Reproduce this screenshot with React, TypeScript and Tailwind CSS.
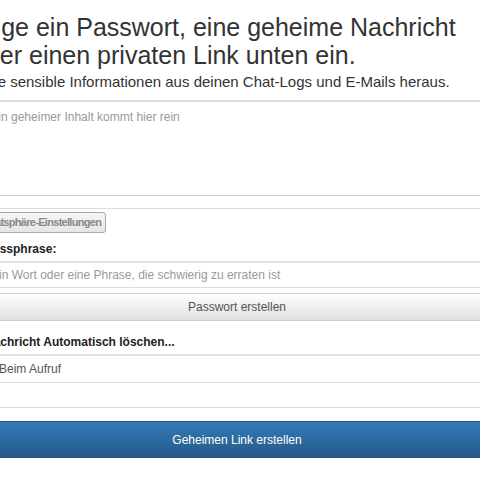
import { useState } from "react"

export default function App() {
  const [secret, setSecret] = useState("")
  const [passphrase, setPassphrase] = useState("")
  const [ttl, setTtl] = useState("Beim Aufruf")

  return (
    <div className="w-[480px] h-[480px] overflow-hidden bg-white font-['Liberation_Sans',Arial,sans-serif] text-[#333]">
      <div className="-ml-[30px] w-[534px]">
        <div className="pt-[13px]">
          <h1 className="text-[25px] leading-[28px] text-[#333] pl-[2px]">
            Füge ein Passwort, eine geheime Nachricht
            <br />
            oder einen privaten Link unten ein.
          </h1>
          <p className="mt-[4px] text-[15px] leading-[18px] text-[#333] pl-[1px]">
            Halte sensible Informationen aus deinen Chat-Logs und E-Mails heraus.
          </p>
        </div>

        {/* Secret */}
        <textarea
          value={secret}
          onChange={(e) => setSecret(e.target.value)}
          placeholder="Dein geheimer Inhalt kommt hier rein"
          className="mt-[9px] block w-full h-[96px] resize-none border border-[#ccc] border-t-2 border-t-[#ddd] px-[12px] pt-[6px] text-[12px] text-[#555] placeholder:text-[#999] outline-none"
        />

        <div className="mt-[12px] border-t border-[#ddd]">
          <button className="h-[21px] pl-[6px] pr-[4px] rounded-[3px] border border-[#aaa] bg-gradient-to-b from-[#f6f6f6] to-[#e6e6e6] text-[11px] tracking-[-0.7px] font-bold text-[#888] leading-none">
            Privatsphäre-Einstellungen
          </button>
        </div>

        {/* Passphrase */}
        <label className="block mt-[8px] pl-[15px] text-[12px] leading-[16px] font-bold text-[#222]">
          Passphrase:
        </label>
        <input
          value={passphrase}
          onChange={(e) => setPassphrase(e.target.value)}
          placeholder="Ein Wort oder eine Phrase, die schwierig zu erraten ist"
          className="mt-[4px] block w-full h-[27px] border border-[#ddd] border-t-2 border-t-[#e2e2e2] pl-[20px] text-[12px] text-[#555] placeholder:text-[#999] outline-none"
        />
        <button className="mt-[5px] block w-full h-[28px] border border-[#ccc] bg-gradient-to-b from-[#ffffff] to-[#e0e0e0] text-[12px] text-[#555]">
          Passwort erstellen
        </button>

        {/* Lifetime */}
        <label className="block mt-[13px] pl-[15px] text-[12px] leading-[16px] font-bold text-[#222]">
          Nachricht Automatisch löschen...
        </label>
        <select
          value={ttl}
          onChange={(e) => setTtl(e.target.value)}
          className="mt-[4px] block w-full h-[29px] appearance-none border border-[#ddd] border-t-2 border-t-[#e2e2e2] pl-[28px] text-[12px] text-[#555] bg-white outline-none"
        >
          <option>Beim Aufruf</option>
          <option>Nach 1 Stunde</option>
          <option>Nach 1 Tag</option>
          <option>Nach 1 Woche</option>
        </select>
        <div className="h-[25px] border-b border-[#ddd]" />

        <button className="mt-[13px] block w-full h-[37px] border border-[#245580] bg-gradient-to-b from-[#337ab7] to-[#265a88] text-[12px] text-white">
          Geheimen Link erstellen
        </button>
      </div>
    </div>
  )
}
